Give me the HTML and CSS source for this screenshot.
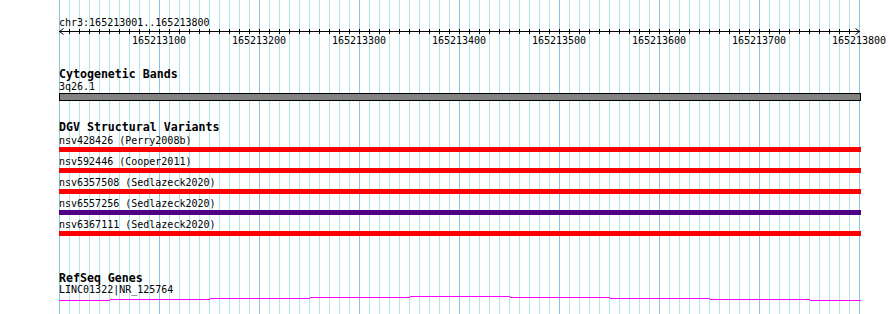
FILE: index.html
```html
<!DOCTYPE html>
<html lang="en">
<head>
    <meta charset="UTF-8">
    <title>Genome Browser - chr3:165213001..165213800</title>
    <link rel="stylesheet" href="styles.css">
</head>
<body>
    <div class="browser">
        <div class="ruler">
            <div class="position">chr3:165213001..165213800</div>
            <svg class="axis" width="802" height="7" viewBox="0 0 802 7">
                <defs>
                    <pattern id="tick" width="10" height="7" patternUnits="userSpaceOnUse">
                        <rect x="0" y="1" width="1" height="5" fill="#000"/>
                    </pattern>
                </defs>
                <rect x="10" y="0" width="781" height="7" fill="url(#tick)"/>
                <rect x="0" y="3" width="801" height="1" fill="#000"/>
                <path d="M4.5 0.5 L0.5 3.5 L4.5 6.5 M796.5 0.5 L800.5 3.5 L796.5 6.5" fill="none" stroke="#000" stroke-width="1"/>
            </svg>
            <div class="tick-labels">
                <span>165213100</span>
                <span>165213200</span>
                <span>165213300</span>
                <span>165213400</span>
                <span>165213500</span>
                <span>165213600</span>
                <span>165213700</span>
                <span>165213800</span>
            </div>
        </div>

        <div class="track cyto">
            <div class="track-title">Cytogenetic Bands</div>
            <div class="item-label">3q26.1</div>
            <div class="band"></div>
        </div>

        <div class="track dgv">
            <div class="track-title">DGV Structural Variants</div>
            <div class="variant">
                <div class="item-label">nsv428426 (Perry2008b)</div>
                <div class="variant-bar loss"></div>
            </div>
            <div class="variant">
                <div class="item-label">nsv592446 (Cooper2011)</div>
                <div class="variant-bar loss"></div>
            </div>
            <div class="variant">
                <div class="item-label">nsv6357508 (Sedlazeck2020)</div>
                <div class="variant-bar loss"></div>
            </div>
            <div class="variant">
                <div class="item-label">nsv6557256 (Sedlazeck2020)</div>
                <div class="variant-bar complex"></div>
            </div>
            <div class="variant">
                <div class="item-label">nsv6367111 (Sedlazeck2020)</div>
                <div class="variant-bar loss"></div>
            </div>
        </div>

        <div class="track refseq">
            <div class="track-title">RefSeq Genes</div>
            <div class="item-label gene-label">LINC01322|NR_125764</div>
            <svg class="gene" width="802" height="8" viewBox="0 0 802 8">
                <g fill="#ff00ff">
                    <rect x="0" y="6" width="51" height="1"/>
                    <rect x="51" y="5" width="100" height="1"/>
                    <rect x="151" y="4" width="100" height="1"/>
                    <rect x="251" y="3" width="100" height="1"/>
                    <rect x="351" y="2" width="100" height="1"/>
                    <rect x="451" y="3" width="100" height="1"/>
                    <rect x="551" y="4" width="100" height="1"/>
                    <rect x="651" y="5" width="100" height="1"/>
                    <rect x="751" y="6" width="51" height="1"/>
                </g>
            </svg>
        </div>
    </div>
</body>
</html>
```

FILE: styles.css
```css
body {
    margin: 0;
    background-color: #fff;
    font-family: "DejaVu Sans Mono", "Liberation Mono", monospace;
    color: #000;
}
.browser {
    margin-left: 59px;
    width: 802px;
    height: 314px;
    overflow: visible;
    background-image:
        linear-gradient(to right, #8cc4e4 1px, transparent 1px),
        linear-gradient(to right, #b4e4ec 1px, transparent 1px);
    background-size: 100px 100%, 10px 100%;
    background-repeat: repeat-x;
}
.ruler {
    padding-top: 17px;
}
.position {
    font-size: 10px;
    line-height: 11px;
    white-space: nowrap;
}
.axis {
    display: block;
}
.tick-labels {
    display: flex;
    padding-left: 50px;
    font-size: 10px;
    line-height: 12px;
}
.tick-labels span {
    flex: 0 0 100px;
    text-align: center;
}
.track {
    margin-top: 21px;
}
.track-title {
    font-size: 11.6px;
    font-weight: bold;
    line-height: 13px;
    white-space: nowrap;
}
.item-label {
    font-size: 10px;
    line-height: 12px;
    white-space: nowrap;
}
.band {
    height: 6px;
    background-color: #828282;
    border: 1px solid #000;
}
.dgv {
    margin-top: 20px;
}
.variant .item-label {
    line-height: 13px;
}
.variant-bar {
    height: 5px;
    margin-bottom: 3px;
}
.loss {
    background-color: #ff0000;
}
.complex {
    background-color: #4f0084;
}
.refseq {
    margin-top: 36px;
}
.gene-label {
    line-height: 9px;
}
.gene {
    display: block;
}
```
